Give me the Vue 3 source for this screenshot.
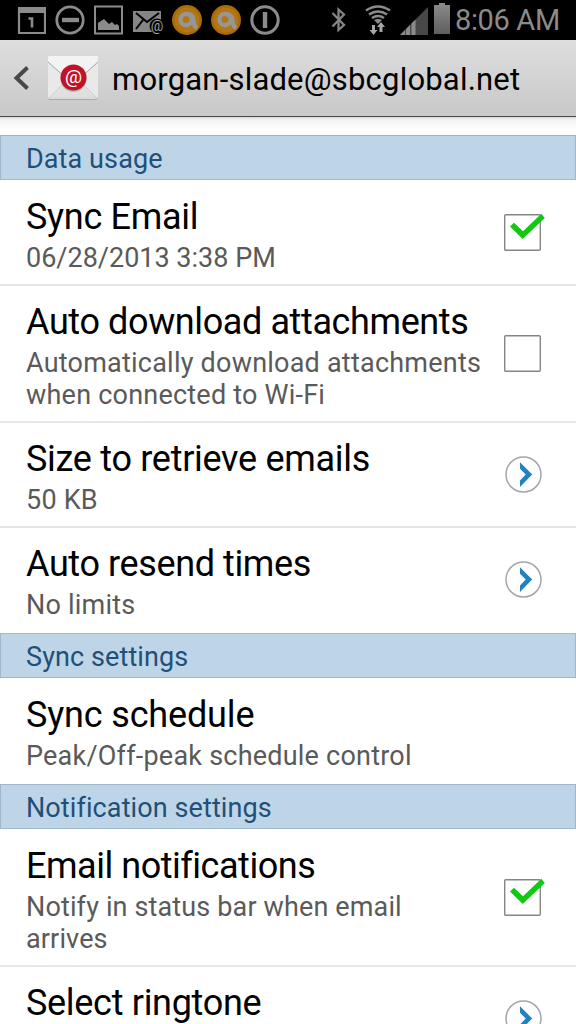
<template>
  <div class="screen">
    <header class="status">
      <div class="notices">
        <svg class="st" width="30" height="30" viewBox="0 0 30 30">
          <path d="M3 4h26v24H3z" fill="none" stroke="#8b8b8b" stroke-width="2.2" />
          <path d="M2 2h28v6H2z" fill="#8b8b8b" />
          <path d="M12.500 13.500h3.500v9" fill="none" stroke="#8b8b8b" stroke-width="2.600" />
        </svg>
        <svg class="st" width="30" height="30" viewBox="0 0 30 30">
          <circle cx="15" cy="15" r="13.2" fill="none" stroke="#8b8b8b" stroke-width="2.800" />
          <path d="M7 15h17" stroke="#8b8b8b" stroke-width="4.4" />
        </svg>
        <svg class="st" width="30" height="30" viewBox="0 0 30 30">
          <path d="M2 1.500h27v27H2z" fill="none" stroke="#8b8b8b" stroke-width="2" />
          <path d="M5 25v-7l6-4 5 5 3-2 3 3 2-1 2 2v4z" fill="#8b8b8b" />
        </svg>
        <svg class="st" width="32" height="30" viewBox="0 0 32 30">
          <path d="M1 6h28v21H1z" fill="#858585" />
          <path d="M4 8l11 9L27 8M4 24l7-9" fill="none" stroke="#000" stroke-width="2" />
          <circle cx="25" cy="21" r="7.500" fill="#000" />
          <text x="25" y="25.500" text-anchor="middle" class="at-small">@</text>
        </svg>
        <svg v-for="n in 2" :key="n" class="st" width="30" height="30" viewBox="0 0 30 30">
          <circle cx="15" cy="15" r="15" fill="#a96a08" />
          <circle cx="15" cy="15" r="12.500" fill="#b27614" />
          <circle cx="14" cy="14.500" r="5.600" fill="none" stroke="#969696" stroke-width="4.200" />
          <path d="M14 8.900q7.500 0 7.500 6.500 0 5 3.500 8" fill="none" stroke="#969696" stroke-width="4.200" />
        </svg>
        <svg class="st" width="32" height="30" viewBox="0 0 32 30">
          <circle cx="16" cy="15" r="13.2" fill="none" stroke="#8b8b8b" stroke-width="3" />
          <path d="M16 7v16" stroke="#8b8b8b" stroke-width="4.400" />
        </svg>
      </div>
      <svg class="signals" width="130" height="40" viewBox="0 0 130 40">
        <path d="M2.500 13l11.500 12-5.500 5V9.500l5.500 5L2.500 26.500" fill="none" stroke="#858585" stroke-width="2.300" />
        <g fill="none" stroke="#8b8b8b" stroke-width="2.600">
          <path d="M36 10.500q12-8 24 0" />
          <path d="M39 14.500q9-6 18 0" />
          <path d="M42 18q6-4 12 0" />
        </g>
        <path d="M44 20q4-2 8 0l-4 4z" fill="#8b8b8b" />
        <path d="M42 25h3v5h2.500L43.500 35l-4-5H42zM49.500 32h3v-5h2.500L51 22l-4 5h2.500z" fill="#a5a5a5" />
        <path d="M70 35L98 7v28z" fill="#484848" />
        <path d="M70 35l5-5v5zM76 35v-6l4-4v10zM81.500 35V23.500l4-4V35z" fill="#8b8b8b" />
        <path d="M109 3h6v2h5v29h-16V5h5z" fill="url(#batt)" />
        <defs>
          <linearGradient id="batt" x1="0" y1="0" x2="0" y2="1">
            <stop offset="0" stop-color="#8b8b8b" />
            <stop offset="1" stop-color="#5e5e5e" />
          </linearGradient>
        </defs>
      </svg>
      <span class="clock">8:06 AM</span>
    </header>

    <div class="actionbar">
      <svg class="back" width="16" height="26" viewBox="0 0 16 26">
        <path d="M14.500 2.500L3.500 13l11 10.500" fill="none" stroke="#484848" stroke-width="4" />
      </svg>
      <svg class="mail" width="52" height="46" viewBox="0 0 52 46">
        <rect x="1" y="2" width="50" height="43" rx="2" fill="#aaa" />
        <rect x="1" y="1" width="50" height="43" rx="2" fill="#e9e9e9" />
        <path d="M2 43l18-18h12l18 18z" fill="#e0e0e0" stroke="#cfcfcf" />
        <path d="M1 1h50v5L32 23H20L1 6z" fill="#f3f3f3" />
        <path d="M1 7l19 17M51 7L32 24" fill="none" stroke="#aaa" />
        <circle cx="26.500" cy="24" r="13" fill="#000" opacity=".18" />
        <circle cx="26.500" cy="22.500" r="13" fill="#c01328" />
        <text x="26.500" y="27.500" text-anchor="middle" class="at">@</text>
      </svg>
      <h1>morgan-slade@sbcglobal.net</h1>
    </div>

    <main>
      <section v-for="group in groups" :key="group.name">
        <h2>{{ group.name }}</h2>
        <div
          v-for="item in group.items"
          :key="item.title"
          class="row"
          :style="{ height: item.h + 'px' }"
        >
          <div class="texts">
            <div class="title" :style="{ letterSpacing: item.ls + 'px' }">{{ item.title }}</div>
            <div class="summary" :class="item.cls">{{ item.summary }}</div>
          </div>
          <svg v-if="item.type === 'check'" class="ctl" width="44" height="44" viewBox="0 0 44 44">
            <rect x="2.700" y="3.700" width="35.600" height="35.600" rx="1" fill="#fff" stroke="#858585" stroke-width="1.400" />
            <path v-if="item.on" d="M8 15.500l4-3.700 9 8.500L39.300 2.800l3.500 4.200L20.700 28z" fill="#12c912" />
          </svg>
          <svg v-if="item.type === 'more'" class="ctl" width="44" height="44" viewBox="0 0 44 44">
            <circle cx="21.500" cy="21.500" r="17.500" fill="#fff" stroke="#a3a7a9" stroke-width="1.500" />
            <path d="M18 9.300v6.500l5.700 5.700-5.700 6V34l12.200-12.500z" fill="#2083c0" />
          </svg>
        </div>
      </section>
    </main>
  </div>
</template>

<script setup>
const groups = [
  {
    name: 'Data usage',
    items: [
      { title: 'Sync Email', summary: '06/28/2013 3:38 PM', type: 'check', on: true, cls: 'date', h: 106, ls: -0.3 },
      { title: 'Auto download attachments', summary: 'Automatically download attachments when connected to Wi-Fi', type: 'check', on: false, h: 137, ls: -0.39 },
      { title: 'Size to retrieve emails', summary: '50 KB', type: 'more', h: 105, ls: -0.29 },
      { title: 'Auto resend times', summary: 'No limits', type: 'more', h: 105, ls: -0.39 }
    ]
  },
  {
    name: 'Sync settings',
    items: [
      { title: 'Sync schedule', summary: 'Peak/Off-peak schedule control', h: 106, ls: -0.16 }
    ]
  },
  {
    name: 'Notification settings',
    items: [
      { title: 'Email notifications', summary: 'Notify in status bar when email arrives', type: 'check', on: true, cls: 'tight', h: 138, ls: -0.47 },
      { title: 'Select ringtone', summary: '', type: 'more', h: 105, ls: -0.3 }
    ]
  }
]
</script>

<style>
body {
  margin: 0;
  overflow: hidden;
}
</style>

<style scoped>
.screen {
  width: 576px;
  height: 1024px;
  overflow: hidden;
  background: #fff;
  font-family: Roboto, sans-serif;
  color: #000;
}
.status {
  display: flex;
  align-items: center;
  height: 40px;
  background: #000;
}
.notices {
  display: flex;
  gap: 8.500px;
  width: 330px;
  padding-left: 16px;
  box-sizing: border-box;
}
.st {
  flex: none;
}
.at-small {
  font-size: 14px;
  fill: #a0a0a0;
}
.signals {
  flex: none;
}
.clock {
  margin-left: -5px;
  font-size: 29px;
  line-height: 40px;
  letter-spacing: -0.35px;
  color: #8b8b8b;
  white-space: nowrap;
}
.actionbar {
  display: flex;
  align-items: center;
  height: 77px;
  box-sizing: border-box;
  padding-left: 13px;
  background: linear-gradient(#dedede, #c8c8c8);
  border-bottom: 1px solid #484848;
}
.mail {
  margin-left: 18px;
}
.at {
  font-size: 19px;
  fill: #fff;
}
h1 {
  margin: 3px 0 0 13px;
  font-size: 31px;
  font-weight: 400;
  letter-spacing: 0.2px;
  white-space: nowrap;
}
main {
  padding-top: 18px;
  background: linear-gradient(#d8d8d8, #f4f4f4 3px, #fff 14px);
}
h2 {
  height: 45px;
  margin: 0;
  padding-left: 25px;
  box-sizing: border-box;
  border: 1px solid #9fb9ca;
  background: #bed5e8;
  color: #1f5078;
  font-size: 27px;
  font-weight: 400;
  letter-spacing: 0.1px;
  line-height: 46px;
}
.row {
  display: flex;
  align-items: center;
  box-sizing: border-box;
  padding: 0 32px 0 26px;
  border-bottom: 2px solid #e6e6e6;
}
h2 + .row {
  padding-top: 1px;
}
.row:last-child {
  border-bottom-color: transparent;
}
.texts {
  align-self: flex-start;
  flex: none;
  width: 460px;
  padding-top: 15px;
  margin-right: 16px;
}
.title {
  font-size: 36px;
  line-height: 42px;
  white-space: nowrap;
}
.summary {
  width: 460px;
  margin-top: 4px;
  font-size: 27px;
  letter-spacing: 0.22px;
  line-height: 32px;
  color: #5a5a5a;
}
.date {
  letter-spacing: 0;
}
.tight {
  width: 440px;
  letter-spacing: 0.14px;
}
.ctl {
  flex: none;
}
</style>
